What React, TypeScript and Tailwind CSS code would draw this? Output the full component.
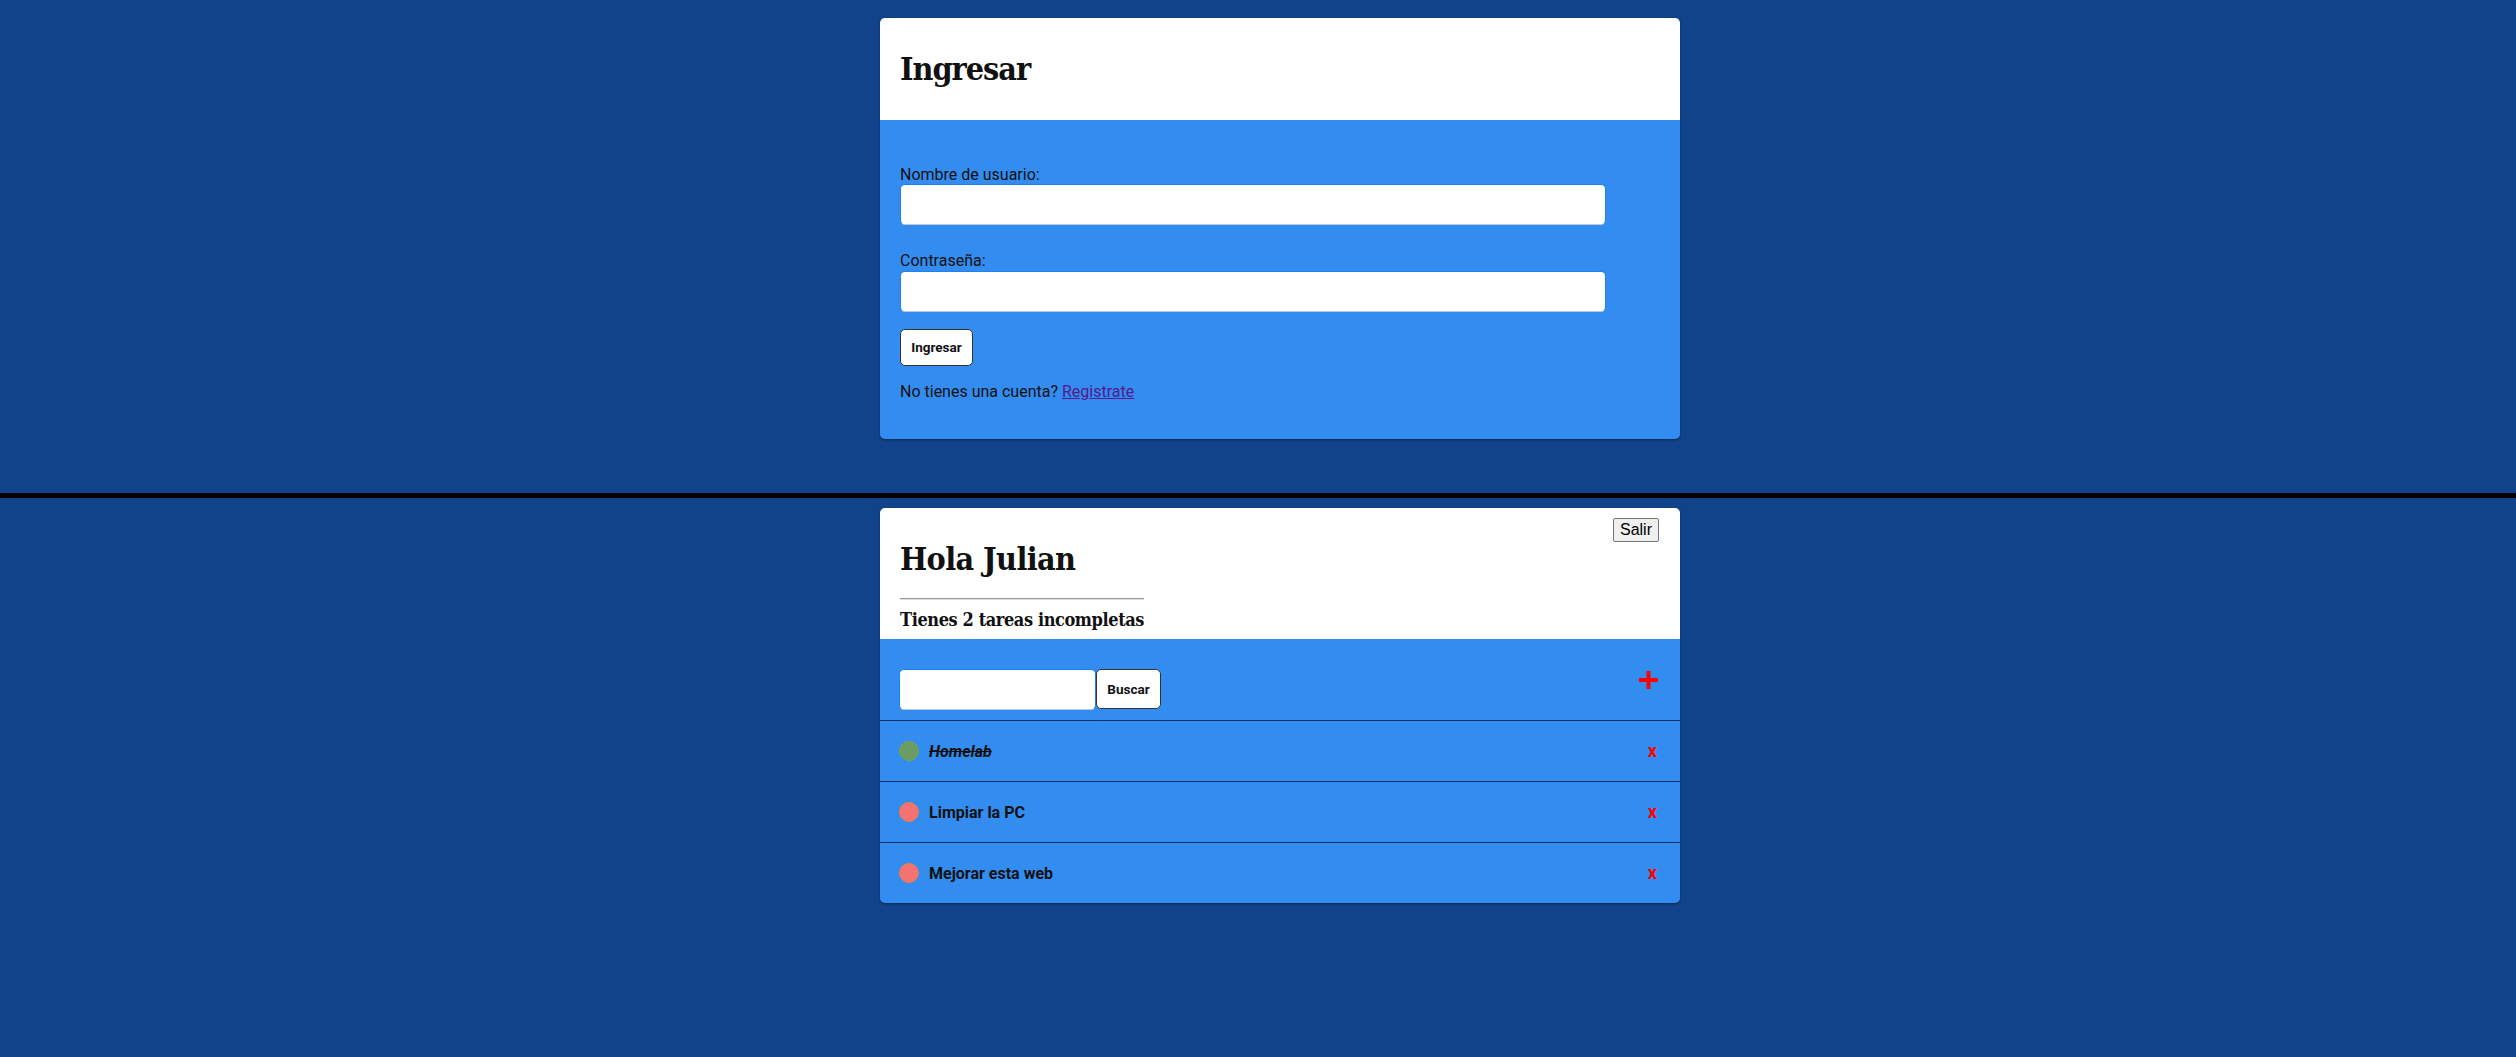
import React from "react";

const slab = "font-['Roboto_Slab','DejaVu_Serif_Condensed','DejaVu_Serif',serif] font-stretch-condensed";

function Task({ name, done }: { name: string; done: boolean }) {
  return (
    <div className="flex h-[61px] items-center justify-between border-t border-[#0c2e64] pl-[19px] pr-[23px]">
      <div className="flex items-center gap-[10px]">
        <span
          className={
            done
              ? "block h-[20px] w-[20px] rounded-full border border-[#7ea63c] bg-[#6a9c63]"
              : "block h-[20px] w-[20px] rounded-full border border-[#f07a4c] bg-[#f47370]"
          }
        />
        <span
          className={
            done
              ? "text-[16px] font-bold italic leading-[19px] text-[#111] line-through"
              : "text-[16px] font-bold leading-[19px] text-[#111]"
          }
        >
          {name}
        </span>
      </div>
      <span className="text-[18px] font-bold leading-[20px] text-[#ff0000]">x</span>
    </div>
  );
}

export default function App() {
  return (
    <div className="min-h-screen w-full bg-[#10438a] font-['Roboto',sans-serif] text-[#111]">
      {/* Login section */}
      <section className="flex h-[493px] justify-center pl-[44px] pt-[18px]">
        <div className="h-fit w-[800px] overflow-hidden rounded-[5px] shadow-[0_1px_2px_rgba(0,0,0,0.45)]">
          <div className="bg-white px-[20px] pb-[32px] pt-[32px]">
            <h1 className={`${slab} text-[32px] font-bold leading-[38px] tracking-[-1px] text-[#111]`}>Ingresar</h1>
          </div>
          <div className="bg-[#338cf0] px-[20px] pb-[38px] pt-[45px]">
            <label className="block text-[16px] leading-[19px]">Nombre de usuario:</label>
            <input
              type="text"
              className="block h-[41px] w-[706px] rounded-[5px] border border-[#1f80ef] border-b-[#b9c9dc] bg-white outline-none"
            />
            <label className="mt-[26px] block text-[16px] leading-[19px]">Contraseña:</label>
            <input
              type="password"
              className="mt-[1px] block h-[41px] w-[706px] rounded-[5px] border border-[#1f80ef] border-b-[#b9c9dc] bg-white outline-none"
            />
            <button className="mt-[17px] block h-[37px] w-[73px] rounded-[5px] border border-[#333] bg-white text-[13.5px] font-bold text-[#111]">
              Ingresar
            </button>
            <p className="mt-[16px] text-[16px] leading-[19px]">
              No tienes una cuenta?{" "}
              <a href="#" className="text-[#551a8b] underline">
                Registrate
              </a>
            </p>
          </div>
        </div>
      </section>

      <div className="h-[5px] w-full bg-black" />

      {/* Tasks section */}
      <section className="flex justify-center pb-[40px] pl-[44px] pt-[10px]">
        <div className="relative w-[800px] overflow-hidden rounded-[5px] shadow-[0_1px_2px_rgba(0,0,0,0.45)]">
          <button className="absolute right-[21px] top-[10px] h-[24px] rounded-[2px] border border-[#767676] bg-[#efefef] px-[6px] font-['Liberation_Sans',Arial,sans-serif] text-[16px] leading-[18px] text-black">
            Salir
          </button>
          <div className="bg-white px-[20px] pb-[7px] pt-[32px]">
            <div className="w-fit">
              <h1 className={`${slab} text-[32px] font-bold leading-[38px] tracking-[-0.6px] text-[#111]`}>Hola Julian</h1>
              <div className="mt-[20px] h-[2px] w-full border-t border-b border-t-[#9a9a9a] border-b-[#dcdcdc]" />
              <h3 className={`${slab} mt-[8px] text-[18px] font-bold leading-[24px] tracking-[-0.4px] text-[#111]`}>
                Tienes 2 tareas incompletas
              </h3>
            </div>
          </div>
          <div className="bg-[#338cf0]">
            <div className="flex items-start justify-between pb-[10px] pl-[19px] pr-[22px] pt-[30px]">
              <div className="flex">
                <input
                  type="text"
                  className="block h-[41px] w-[197px] rounded-[5px] border border-[#1f80ef] border-b-[#b9c9dc] bg-white outline-none"
                />
                <button className="block h-[40px] w-[65px] rounded-[5px] border border-[#333] bg-white text-[13.5px] font-bold text-[#111]">
                  Buscar
                </button>
              </div>
              <svg width="19" height="18" viewBox="0 0 19 18" className="mt-[2px]">
                <rect x="0" y="7" width="19" height="4" fill="#ff0000" />
                <rect x="7.5" y="0" width="4" height="18" fill="#ff0000" />
              </svg>
            </div>
            <Task name="Homelab" done={true} />
            <Task name="Limpiar la PC" done={false} />
            <Task name="Mejorar esta web" done={false} />
          </div>
        </div>
      </section>
    </div>
  );
}
